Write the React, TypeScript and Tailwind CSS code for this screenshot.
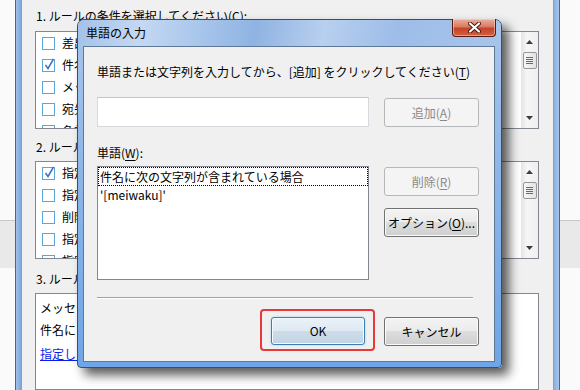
import React from "react";

const U = ({ c }: { c: string }) => (
  <span className="underline underline-offset-[2px]">{c}</span>
);

function Checkbox({ checked }: { checked?: boolean }) {
  return (
    <span className="relative w-[13px] h-[13px] shrink-0 border border-[#5aa5d9] bg-white">
      {checked && (
        <svg className="absolute left-[0px] top-[-3px]" width="13" height="14" viewBox="0 0 13 14">
          <path d="M2.5 8 L5 11.5 L10.5 2" fill="none" stroke="#3d72c4" strokeWidth="1.5" />
        </svg>
      )}
    </span>
  );
}

function ScrollBar() {
  return (
    <div className="w-[17px] shrink-0 flex flex-col items-center bg-[linear-gradient(90deg,#e4e4e4,#f6f6f6_35%,#efefef)]">
      <div className="h-[20px] flex items-center justify-center">
        <svg width="7" height="4" viewBox="0 0 7 4">
          <path d="M0 4 L3.5 0 L7 4Z" fill="#3c3c3c" />
        </svg>
      </div>
      <div className="w-[14px] h-[17px] rounded-[2px] border border-[#979797] bg-[linear-gradient(90deg,#f7f7f7,#e2e2e2)] flex flex-col items-center justify-center gap-[1px]">
        <div className="w-[7px] h-[1px] bg-[#6a6a6a]" />
        <div className="w-[7px] h-[1px] bg-[#6a6a6a]" />
        <div className="w-[7px] h-[1px] bg-[#6a6a6a]" />
        <div className="w-[7px] h-[1px] bg-[#6a6a6a]" />
      </div>
      <div className="flex-1" />
      <div className="h-[20px] flex items-center justify-center">
        <svg width="7" height="4" viewBox="0 0 7 4">
          <path d="M0 0 L3.5 4 L7 0Z" fill="#3c3c3c" />
        </svg>
      </div>
    </div>
  );
}

function CheckList({ items }: { items: { t: string; c?: boolean }[] }) {
  return (
    <div className="h-[98px] shrink-0 border border-[#828790] bg-white flex overflow-hidden">
      <div className="flex-1 flex flex-col overflow-hidden">
        {items.map((it, i) => (
          <div key={i} className="h-[22px] shrink-0 flex items-center pl-[6px] gap-[7px] whitespace-nowrap">
            <Checkbox checked={it.c} />
            <span>{it.t}</span>
          </div>
        ))}
      </div>
      <ScrollBar />
    </div>
  );
}

const btnNormal =
  "h-[29px] flex items-center justify-center rounded-[3px] border border-[#707070] shadow-[inset_0_0_0_1px_#fbfbfb] bg-[linear-gradient(#f3f3f3,#ebebeb_50%,#dddddd_50%,#cfcfcf)] text-black";
const btnDisabled =
  "h-[29px] flex items-center justify-center rounded-[3px] border border-[#b5b8bb] bg-[#f4f4f4] text-[#8a8a8a]";

function SideStrip({ w }: { w: string }) {
  return (
    <div className={`${w} shrink-0 flex flex-col`}>
      <div className="h-[220px] bg-[#fafafa]" />
      <div className="h-[48px] bg-[#e9e9e9] border-t border-[#c8c8c8]" />
      <div className="flex-1 bg-[#fafafa]" />
    </div>
  );
}

export default function App() {
  return (
    <div className="relative w-[580px] h-[390px] overflow-hidden flex bg-[#fafafa] text-black text-[12px] leading-[16px] font-['Noto_Sans_CJK_JP','Noto_Sans',sans-serif]">
      <SideStrip w="w-[15px]" />

      {/* background window */}
      <div className="w-[545px] shrink-0 flex border-x border-[#4f6580]">
        <div className="w-[5px] bg-[linear-gradient(90deg,#a4c1e8,#7ea6dc)]" />
        <div className="flex-1 flex flex-col bg-[#f0f0f0] border-x border-[#8a9fbb] pl-[13px] pr-[14px]">
          <div className="mt-[8px] h-[16px] pl-[1px] whitespace-nowrap">
            1. ルールの条件を選択してください(<U c="C" />):
          </div>
          <div className="mt-[7px]">
            <CheckList
              items={[
                { t: "差出人が [名前/パブリック グループ] の場合" },
                { t: "件名に [特定の文字] が含まれる場合", c: true },
                { t: "メッセージの [優先度] が指定されている場合" },
                { t: "宛先が [自分] だけの場合" },
                { t: "名前が [宛先] ボックスにある場合" },
              ]}
            />
          </div>
          <div className="mt-[10px] h-[16px] pl-[1px] whitespace-nowrap">
            2. ルールの処理を選択してください(<U c="A" />):
          </div>
          <div className="mt-[6px]">
            <CheckList
              items={[
                { t: "指定フォルダーへ移動する", c: true },
                { t: "指定フォルダーへコピーする" },
                { t: "削除する" },
                { t: "指定したユーザーに転送する" },
                { t: "指定したテンプレートで返信する" },
              ]}
            />
          </div>
          <div className="mt-[12px] h-[16px] pl-[1px] whitespace-nowrap">
            3. ルールの説明 (下線部をクリックすると編集できます)(<U c="D" />):
          </div>
          <div className="mt-[6px] flex-1 border border-[#828790] bg-white pl-[4px] pt-[3px] flex flex-col whitespace-nowrap leading-[22px]">
            <div>メッセージ受信時にこのルールを適用する</div>
            <div>件名に [meiwaku] が含まれる場合</div>
            <div className="mt-[2px] text-[#0a1cf0] underline">指定したフォルダー へ移動する</div>
          </div>
        </div>
        <div className="w-[5px] bg-[linear-gradient(90deg,#8ab0e2,#a8c4ea)]" />
      </div>

      <SideStrip w="flex-1" />

      {/* dialog */}
      <div className="absolute left-[77px] top-[19px] w-[425px] h-[349px] flex flex-col rounded-t-[7px] rounded-b-[4px] border border-[#34506f] bg-[linear-gradient(180deg,#a9c5eb,#8fb7e8_40%,#6fa5e6)] shadow-[7px_7px_11px_rgba(0,0,0,0.65)]">
        <div className="relative h-[26px] shrink-0 flex items-center pl-[8px] rounded-t-[6px] bg-[linear-gradient(100deg,#a3c1e9_0%,#c4d8f2_15%,#aac7ec_28%,#8fb3e2_42%,#b8cfef_58%,#9dbde8_75%,#a7c4eb_100%)]">
          <span className="text-black">単語の入力</span>
          <div className="absolute right-[5px] -top-[1px] w-[44px] h-[18px] rounded-b-[4px] border border-t-0 border-[#5a1a10] bg-[linear-gradient(180deg,#eab0a0,#d97b62_45%,#c5432a_55%,#d2613f)] shadow-[inset_0_0_0_1px_rgba(255,220,210,0.5)] flex items-center justify-center">
            <svg width="13" height="11" viewBox="0 0 13 11">
              <path d="M2 1.5 L11 9.5 M11 1.5 L2 9.5" stroke="#4a140a" strokeWidth="4" strokeLinecap="round" />
              <path d="M2 1.5 L11 9.5 M11 1.5 L2 9.5" stroke="#ffffff" strokeWidth="2.2" strokeLinecap="round" />
            </svg>
          </div>
        </div>

        <div className="flex-1 ml-[5px] mr-[6px] mb-[5px] border border-[#5f7898] bg-[#f0f0f0] flex flex-col pl-[13px] pr-[15px] pt-[17px]">
          <div className="h-[16px] whitespace-nowrap">
            単語または文字列を入力してから、[追加] をクリックしてください(<U c="T" />)
          </div>

          <div className="mt-[17px] flex items-start gap-[15px]">
            <div className="w-[272px] h-[30px] bg-white border border-[#d6d9de] border-t-[#c2c6cc]" />
            <div className={`${btnDisabled} mt-[1px] w-[95px]`}>
              追加(<U c="A" />)
            </div>
          </div>

          <div className="mt-[18px] h-[16px]">
            単語(<U c="W" />):
          </div>

          <div className="mt-[5px] flex items-start gap-[15px]">
            <div className="w-[272px] h-[114px] bg-white border border-[#828790] flex flex-col">
              <div className="h-[19px] border border-dotted border-black flex items-center pl-[1px] whitespace-nowrap">
                件名に次の文字列が含まれている場合
              </div>
              <div className="h-[18px] flex items-center pl-[2px] whitespace-nowrap">'[meiwaku]'</div>
            </div>
            <div className="flex flex-col gap-[12px] mt-[1px]">
              <div className={`${btnDisabled} w-[95px]`}>
                削除(<U c="R" />)
              </div>
              <div className={`${btnNormal} w-[95px]`}>
                オプション(<U c="O" />)...
              </div>
            </div>
          </div>

          <div className="mt-[17px] mr-[6px] border-t border-[#a0a0a0] border-b border-b-white" />

          <div className="mt-[18px] flex justify-end gap-[19px]">
            <div className="relative">
              <div className="w-[94px] h-[28px] flex items-center justify-center rounded-[3px] border border-[#3c7fb1] shadow-[inset_0_0_0_1px_#f4faff,0_0_2px_#8cc8ef] bg-[linear-gradient(#eaf2f9,#dfe9f2_50%,#cddcea_50%,#c3d5e5)]">
                OK
              </div>
              <span className="absolute -left-[11px] -right-[10px] -top-[8px] -bottom-[5px] border-2 border-[#e8383a] rounded-[4px]" />
            </div>
            <div className={`${btnNormal} w-[95px] h-[28px]`}>キャンセル</div>
          </div>
        </div>
      </div>
    </div>
  );
}
